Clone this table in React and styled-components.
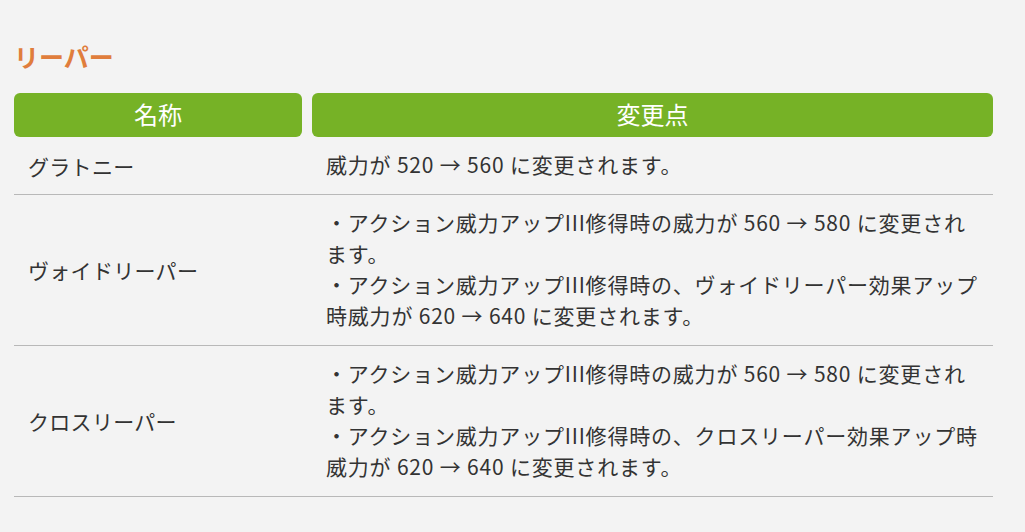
import React from "react";
import styled, { createGlobalStyle } from "styled-components";

const rows = [
  {
    name: "グラトニー",
    changes: ["威力が 520 → 560 に変更されます。"],
  },
  {
    name: "ヴォイドリーパー",
    changes: [
      "・アクション威力アップIII修得時の威力が 560 → 580 に変更されます。",
      "・アクション威力アップIII修得時の、ヴォイドリーパー効果アップ時威力が 620 → 640 に変更されます。",
    ],
  },
  {
    name: "クロスリーパー",
    changes: [
      "・アクション威力アップIII修得時の威力が 560 → 580 に変更されます。",
      "・アクション威力アップIII修得時の、クロスリーパー効果アップ時威力が 620 → 640 に変更されます。",
    ],
  },
];

export default function App() {
  return (
    <>
      <GlobalStyle />
      <Page>
        <Title>リーパー</Title>
        <Table>
          <HeadRow>
            <HeadCell>名称</HeadCell>
            <HeadCell>変更点</HeadCell>
          </HeadRow>
          {rows.map((row) => (
            <Row key={row.name}>
              <NameCell>{row.name}</NameCell>
              <ChangeCell>
                {row.changes.map((c) => (
                  <Line key={c}>{c}</Line>
                ))}
              </ChangeCell>
            </Row>
          ))}
        </Table>
      </Page>
    </>
  );
}

const GlobalStyle = createGlobalStyle`
  html, body {
    margin: 0;
    background: #f3f3f3;
  }
  body {
    font-family: "Noto Sans CJK JP", "Noto Sans", sans-serif;
    color: #333333;
  }
`;

const Page = styled.div`
  padding: 36px 0 0 14px;
  width: 979px;
`;

const Title = styled.h2`
  margin: 0 0 17px;
  font-size: 25px;
  line-height: 40px;
  font-weight: 700;
  color: #e07d3c;
`;

const Table = styled.div`
  display: flex;
  flex-direction: column;
`;

const HeadRow = styled.div`
  display: grid;
  grid-template-columns: 288px 1fr;
  column-gap: 10px;
`;

const HeadCell = styled.div`
  background: #76b226;
  color: #ffffff;
  border-radius: 6px;
  height: 44px;
  display: flex;
  align-items: center;
  justify-content: center;
  font-size: 24px;
  padding-bottom: 3px;
  box-sizing: border-box;
`;

const Row = styled.div`
  display: grid;
  grid-template-columns: 288px 1fr;
  column-gap: 10px;
  border-bottom: 1px solid #b8b8b8;
  align-items: center;
`;

const NameCell = styled.div`
  padding: 0 14px;
  font-size: 21px;
  letter-spacing: 0.3px;
`;

const ChangeCell = styled.div`
  padding: 12px 14px 14px 14px;
  font-size: 21px;
  line-height: 31px;
  letter-spacing: 0.8px;
`;

const Line = styled.p`
  margin: 0;
`;
